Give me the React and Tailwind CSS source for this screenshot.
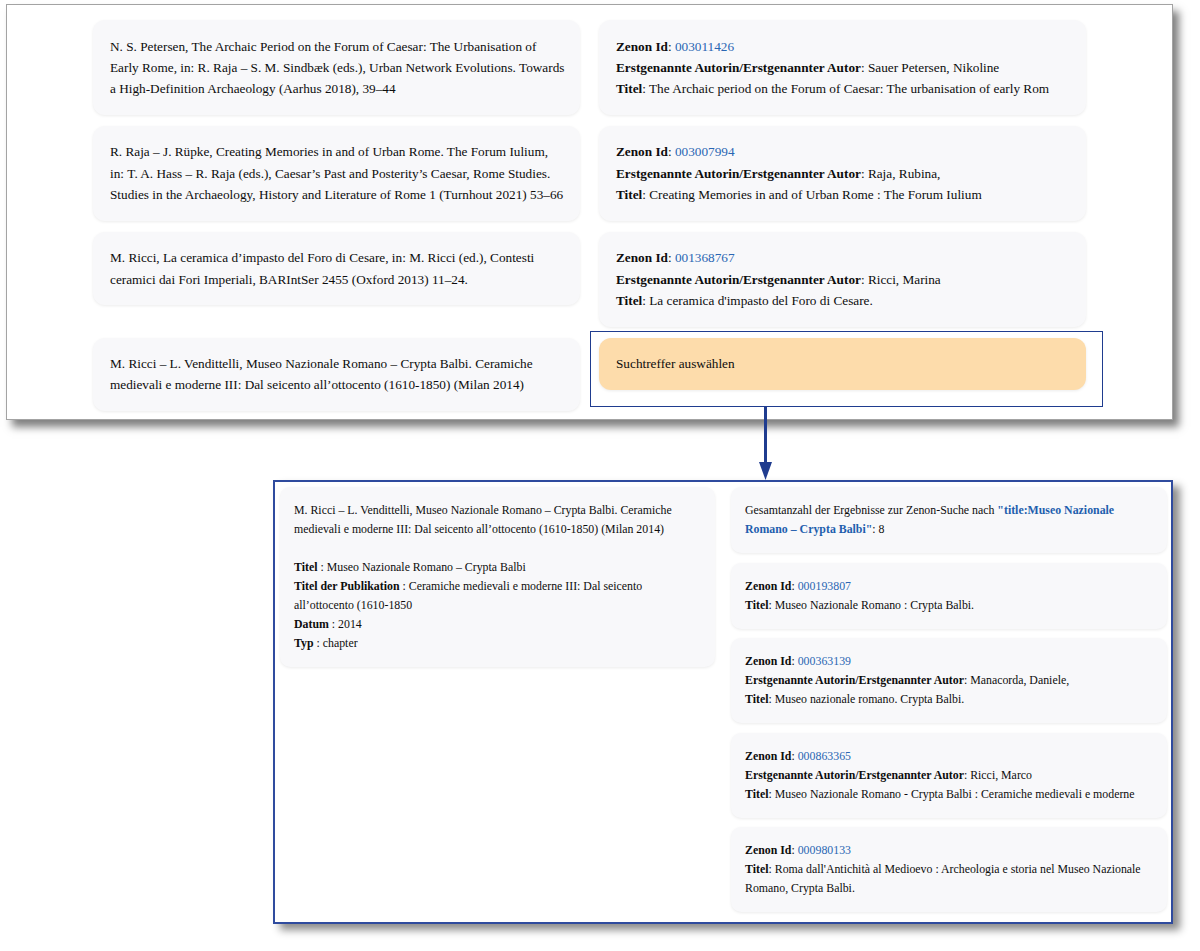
const serif = { fontFamily: '"Liberation Serif", "Times New Roman", serif' };

const topRows = [
  {
    left: "N. S. Petersen, The Archaic Period on the Forum of Caesar: The Urbanisation of Early\u00a0Rome, in: R. Raja – S. M. Sindbæk (eds.), Urban Network Evolutions. Towards a High-Definition Archaeology (Aarhus 2018), 39–44",
    id: "003011426",
    author: "Sauer Petersen, Nikoline",
    title: "The Archaic period on the Forum of Caesar: The urbanisation of early Rom",
  },
  {
    left: "R. Raja – J. Rüpke, Creating Memories in and of Urban Rome. The Forum Iulium, in:\u00a0T. A. Hass – R. Raja (eds.), Caesar’s Past and Posterity’s Caesar, Rome Studies. Studies in the Archaeology, History and Literature of Rome 1 (Turnhout 2021) 53–66",
    id: "003007994",
    author: "Raja, Rubina,",
    title: "Creating Memories in and of Urban Rome : The Forum Iulium",
  },
  {
    left: "M. Ricci, La ceramica d’impasto del Foro di Cesare, in: M. Ricci (ed.), Contesti ceramici dai Fori Imperiali, BARIntSer 2455 (Oxford 2013) 11–24.",
    id: "001368767",
    author: "Ricci, Marina",
    title: "La ceramica d'impasto del Foro di Cesare.",
  },
];

const results = [
  { id: "000193807", title: "Museo Nazionale Romano : Crypta Balbi." },
  { id: "000363139", author: "Manacorda, Daniele,", title: "Museo nazionale romano. Crypta Balbi." },
  { id: "000863365", author: "Ricci, Marco", title: "Museo Nazionale Romano - Crypta Balbi : Ceramiche medievali e moderne" },
  { id: "000980133", title: "Roma dall'Antichità al Medioevo : Archeologia e storia nel Museo Nazionale Romano, Crypta Balbi." },
];

const TopCard = ({ children, orange }) => (
  <div
    className={`rounded-[12px] pl-[17px] pr-[13px] py-[15.5px] shadow-[0_1px_3px_rgba(0,0,0,0.08)] ${
      orange ? "bg-[#fddcab]" : "bg-[#f8f8fa]"
    }`}
  >
    {children}
  </div>
);

const SmallCard = ({ children }) => (
  <div className="rounded-[10px] bg-[#f8f8fa] px-[14px] py-[14px] shadow-[0_1px_3px_rgba(0,0,0,0.08)]">
    {children}
  </div>
);

const ZenonEntry = ({ item }) => (
  <>
    <div>
      <b>Zenon Id</b>: <span className="text-[#2a66b3]">{item.id}</span>
    </div>
    {item.author && (
      <div>
        <b>Erstgenannte Autorin/Erstgenannter Autor</b>: {item.author}
      </div>
    )}
    <div>
      <b>Titel</b>: {item.title}
    </div>
  </>
);

export default function App() {
  return (
    <div className="relative h-[951px] w-[1200px] overflow-hidden bg-white text-[#0d0d0d]" style={serif}>
      {/* top screenshot */}
      <div className="ml-[6px] mt-[4px] h-[416px] w-[1167px] overflow-hidden border border-[#a3a3a3] bg-white pt-[15px] shadow-[6px_7px_8px_rgba(0,0,0,0.5)]">
        <div className="mx-auto grid w-[993px] grid-cols-2 items-start gap-x-[19px] gap-y-[11px] text-[13.25px] leading-[21.3px]">
          {topRows.map((row) => (
            <div key={row.id} className="contents">
              <TopCard>{row.left}</TopCard>
              <TopCard>
                <ZenonEntry item={row} />
              </TopCard>
            </div>
          ))}
          <TopCard>
            M. Ricci – L. Vendittelli, Museo Nazionale Romano – Crypta Balbi. Ceramiche medievali e moderne III: Dal seicento all’ottocento (1610-1850) (Milan 2014)
          </TopCard>
          <TopCard orange>Suchtreffer auswählen</TopCard>
        </div>
      </div>

      {/* bottom screenshot */}
      <div className="ml-[273px] mt-[60px] h-[444px] w-[900px] border-2 border-[#2f4b9e] bg-white pl-[5px] pr-[4px] pt-[5px] shadow-[7px_6px_8px_rgba(0,0,0,0.45)]">
        <div className="grid grid-cols-[435px_436px] items-start gap-x-[16px] text-[11.85px] leading-[19px]">
          <SmallCard>
            <div>
              M. Ricci – L. Vendittelli, Museo Nazionale Romano – Crypta Balbi. Ceramiche medievali e moderne III: Dal seicento all’ottocento (1610-1850) (Milan 2014)
            </div>
            <div className="h-[19px]" />
            <div>
              <b>Titel</b> : Museo Nazionale Romano – Crypta Balbi
            </div>
            <div>
              <b>Titel der Publikation</b> : Ceramiche medievali e moderne III: Dal seicento all’ottocento (1610-1850
            </div>
            <div>
              <b>Datum</b> : 2014
            </div>
            <div>
              <b>Typ</b> : chapter
            </div>
          </SmallCard>
          <div className="flex flex-col gap-[9.5px]">
            <SmallCard>
              Gesamtanzahl der Ergebnisse zur Zenon-Suche nach{" "}
              <b className="text-[#1f5fae]">"title:Museo Nazionale Romano – Crypta Balbi"</b>: 8
            </SmallCard>
            {results.map((r) => (
              <SmallCard key={r.id}>
                <ZenonEntry item={r} />
              </SmallCard>
            ))}
          </div>
        </div>
      </div>

      {/* annotation: highlight box and arrow */}
      <div className="absolute left-[590px] top-[331px] h-[76px] w-[513px] border-[1.5px] border-[#1f3c8f]" />
      <div className="absolute left-[764px] top-[406px] h-[60px] w-[3px] bg-[#1f3c8f]" />
      <svg className="absolute left-[759px] top-[462px]" width="13" height="18" viewBox="0 0 13 18">
        <polygon points="0,0 13,0 6.5,18" fill="#1f3c8f" />
      </svg>
    </div>
  );
}
